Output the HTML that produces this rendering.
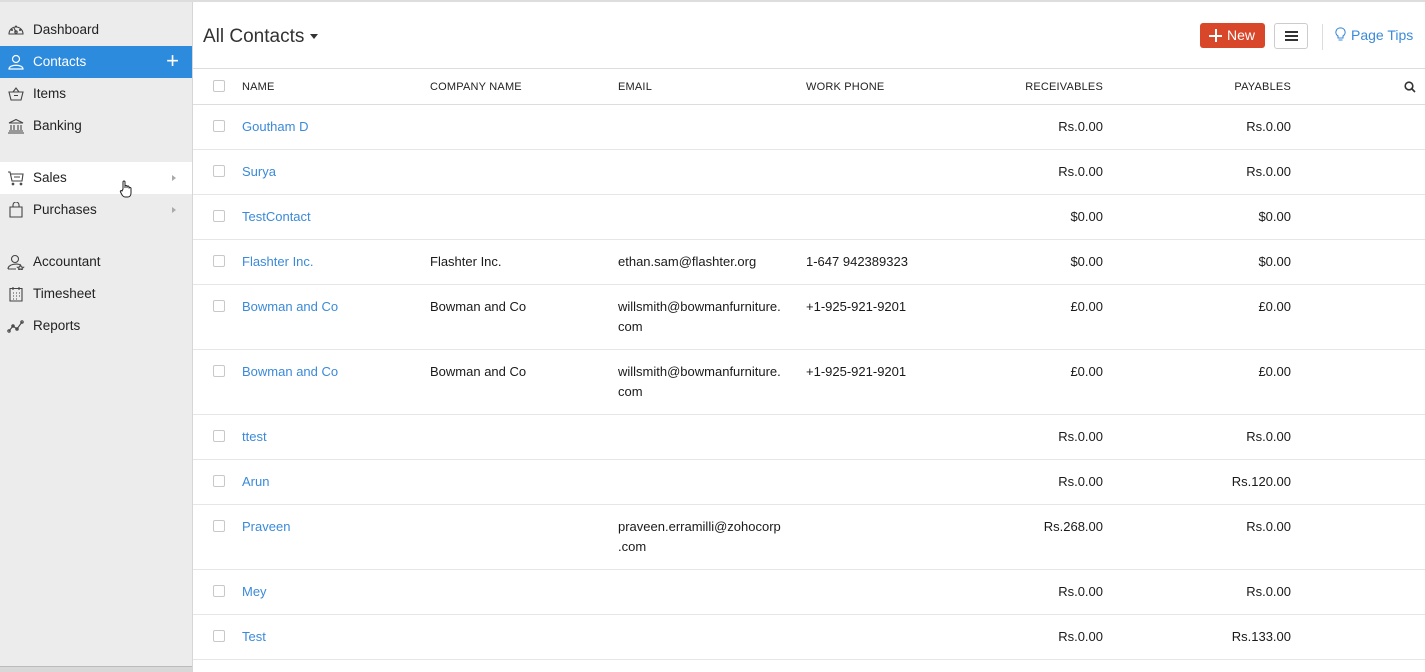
<!DOCTYPE html>
<html><head><meta charset="utf-8"><style>
*{box-sizing:border-box;margin:0;padding:0}
body{width:1425px;height:672px;overflow:hidden;font-family:"Liberation Sans",sans-serif;font-size:13px;color:#222;background:#fff;position:relative}
.top{position:absolute;left:0;top:0;width:1425px;height:2px;background:#ddd}
.side{position:absolute;left:0;top:2px;width:193px;height:670px;background:#ececec;border-right:1px solid #d6d6d6}
.side .bot{position:absolute;left:0;bottom:0;width:192px;height:6px;background:#d8d8d8;border-top:1px solid #bbb}
.nav{position:absolute;left:0;width:192px;height:32px;line-height:32px;padding-left:33px;font-size:13.5px;color:#222}
.nav svg{position:absolute;left:7px;top:8px}
.nav.act{background:#2c8bdc;color:#fff}
.nav.hov{background:#fff}
.arr{position:absolute;right:16px;top:13px;width:0;height:0;border-left:4px solid #aaa;border-top:3.5px solid transparent;border-bottom:3.5px solid transparent}
.main{position:absolute;left:193px;top:2px;right:0}
h1{position:absolute;left:10px;top:24px;font-size:19px;font-weight:normal;color:#333}
.caret{display:inline-block;margin-left:6px;vertical-align:middle;border-top:5px solid #333;border-left:4px solid transparent;border-right:4px solid transparent}
.new{position:absolute;left:1007px;top:21px;width:65px;height:25px;background:#d9472b;border-radius:3px;color:#fff;font-size:14px;line-height:25px;padding-left:27px}
.new:before,.new:after{content:"";position:absolute;background:#fff}
.new:before{left:9px;top:12px;width:13px;height:1.5px}
.new:after{left:15px;top:6px;width:1.5px;height:13px}
.menu{position:absolute;left:1081px;top:21px;width:34px;height:26px;border:1px solid #ccc;border-radius:3px}
.menu i{position:absolute;left:10px;width:13px;height:2px;background:#333}
.vsep{position:absolute;left:1129px;top:22px;width:1px;height:26px;background:#ddd}
.tips{position:absolute;left:1142px;top:25px;color:#3b8ad9;font-size:14px}
table{position:absolute;left:0;top:66px;width:1232px;border-collapse:collapse;table-layout:fixed}
th{height:36px;font-size:11px;font-weight:normal;color:#222;text-align:left;border-top:1px solid #ddd;border-bottom:1px solid #ddd;letter-spacing:.2px}
td{vertical-align:top;padding-top:12px;border-bottom:1px solid #e6e6e6;line-height:20px;font-size:13px;color:#1a1a1a}
td:first-child,th:first-child{padding-left:20px}
.cb{display:inline-block;width:12px;height:12px;border:1px solid #c8c8c8;border-radius:2px;vertical-align:middle;margin-top:-2px}
td.cbc{padding-top:11px}
td.nm{color:#3b8ad9}
.r{text-align:right}
tr.h1 td{height:45px}
tr.h2 td{height:65px}
</style></head><body>
<div class="top"></div>
<div class="side">
<div class="nav" style="top:12px"><svg width="18" height="16" viewBox="0 0 18 16" fill="none" stroke="#444" stroke-width="1.1"><path d="M2 12 A7 7 0 1 1 16 12 Z"/><circle cx="9" cy="10" r="1.2"/><path d="M9 10 L7 6"/><circle cx="5" cy="8" r=".5"/><circle cx="13" cy="8" r=".5"/><circle cx="9" cy="4.5" r=".5"/></svg>Dashboard</div>
<div class="nav act" style="top:44px"><svg width="18" height="16" viewBox="0 0 18 16" fill="none" stroke="#fff" stroke-width="1.2"><circle cx="9" cy="5" r="3.5"/><path d="M2 15 C2 10 16 10 16 15 Z"/></svg>Contacts<span style="position:absolute;right:13px;top:-1px;font-size:22px;font-weight:300">+</span></div>
<div class="nav" style="top:76px"><svg width="18" height="16" viewBox="0 0 18 16" fill="none" stroke="#444" stroke-width="1.1"><path d="M2 6 H16 L14 14 H4 Z M6 6 L9 2 L12 6 M7 9.5 H11"/></svg>Items</div>
<div class="nav" style="top:108px"><svg width="18" height="16" viewBox="0 0 18 16" fill="none" stroke="#444" stroke-width="1.1"><path d="M2 5 L9 1.5 L16 5 Z M4 7 V12 M7 7 V12 M11 7 V12 M14 7 V12 M2 13 H16 M1 15 H17"/></svg>Banking</div>
<div class="nav hov" style="top:160px"><svg width="18" height="16" viewBox="0 0 18 16" fill="none" stroke="#444" stroke-width="1.1"><path d="M1 2 H3 L5 11 H15 L16 4 H4 M7 7 H13"/><circle cx="6" cy="14" r=".8"/><circle cx="14" cy="14" r=".8"/></svg>Sales<span class="arr"></span></div>
<div class="nav" style="top:192px"><svg width="18" height="16" viewBox="0 0 18 16" fill="none" stroke="#444" stroke-width="1.1"><path d="M3 5 H15 V15 H3 Z M6 5 V3 A3 3 0 0 1 12 3 V5"/></svg>Purchases<span class="arr"></span></div>
<div class="nav" style="top:244px"><svg width="18" height="16" viewBox="0 0 18 16" fill="none" stroke="#444" stroke-width="1.1"><circle cx="8" cy="5" r="3.5"/><path d="M1 15 C1 10 11 9 13 11 M1 15 H9"/><path d="M13.5 11 L14.5 13 L16.5 13.3 L15 14.6 L15.4 16 L13.5 15 L11.6 16 L12 14.6 L10.5 13.3 L12.5 13 Z"/></svg>Accountant</div>
<div class="nav" style="top:276px"><svg width="18" height="16" viewBox="0 0 18 16" fill="none" stroke="#444" stroke-width="1.1"><path d="M3 2.5 H15 V15 H3 Z M6 1 V4 M12 1 V4"/><path d="M6 7 h1 M9 7 h1 M12 7 h1 M6 10 h1 M9 10 h1 M12 10 h1 M6 13 h1 M9 13 h1"/></svg>Timesheet</div>
<div class="nav" style="top:308px"><svg width="18" height="16" viewBox="0 0 18 16" fill="none" stroke="#444" stroke-width="1.1"><path d="M2 13 L6 8 L10 11 L15 4"/><circle cx="2" cy="13" r="1.2"/><circle cx="6" cy="8" r="1.2"/><circle cx="10" cy="11" r="1.2"/><circle cx="15" cy="4" r="1.2"/></svg>Reports</div>
<svg style="position:absolute;left:119px;top:178px" width="15" height="18" viewBox="0 0 15 18" fill="#fff" stroke="#222" stroke-width="1"><path d="M4 9 V2 A1 1 0 0 1 6 2 V8 V6.5 A1 1 0 0 1 8 6.5 V8 V7 A1 1 0 0 1 10 7 V8.5 A1 1 0 0 1 12 8.5 V13 C12 15 11 17 9 17 H6 C4 17 3 15 1.5 12 C1 11 2 10 3 11 Z"/></svg>
<div class="bot"></div>
</div>
<div class="main">
<h1>All Contacts<span class="caret"></span></h1>
<div class="new">New</div>
<div class="menu"><i style="top:7px"></i><i style="top:11px"></i><i style="top:15px"></i></div>
<div class="vsep"></div>
<div class="tips"><svg width="11" height="15" viewBox="0 0 11 15" fill="none" stroke="#3b8ad9" stroke-width="1.1" style="vertical-align:-2px;margin-right:5px"><path d="M5.5 1 A4.3 4.3 0 0 1 8 9 V11 H3 V9 A4.3 4.3 0 0 1 5.5 1 Z M3.5 13 H7.5"/></svg>Page Tips</div>
<table>
<colgroup><col style="width:49px"><col style="width:188px"><col style="width:188px"><col style="width:188px"><col style="width:137px"><col style="width:160px"><col style="width:188px"><col></colgroup>
<tr><th><span class="cb"></span></th><th>NAME</th><th>COMPANY NAME</th><th>EMAIL</th><th>WORK PHONE</th><th class="r">RECEIVABLES</th><th class="r">PAYABLES</th><th></th></tr>
<tr class="h1"><td class="cbc"><span class="cb"></span></td><td class="nm">Goutham D</td><td></td><td></td><td></td><td class="r">Rs.0.00</td><td class="r">Rs.0.00</td><td></td></tr>
<tr class="h1"><td class="cbc"><span class="cb"></span></td><td class="nm">Surya</td><td></td><td></td><td></td><td class="r">Rs.0.00</td><td class="r">Rs.0.00</td><td></td></tr>
<tr class="h1"><td class="cbc"><span class="cb"></span></td><td class="nm">TestContact</td><td></td><td></td><td></td><td class="r">$0.00</td><td class="r">$0.00</td><td></td></tr>
<tr class="h1"><td class="cbc"><span class="cb"></span></td><td class="nm">Flashter Inc.</td><td>Flashter Inc.</td><td>ethan.sam@flashter.org</td><td>1-647 942389323</td><td class="r">$0.00</td><td class="r">$0.00</td><td></td></tr>
<tr class="h2"><td class="cbc"><span class="cb"></span></td><td class="nm">Bowman and Co</td><td>Bowman and Co</td><td>willsmith@bowmanfurniture.<br>com</td><td>+1-925-921-9201</td><td class="r">£0.00</td><td class="r">£0.00</td><td></td></tr>
<tr class="h2"><td class="cbc"><span class="cb"></span></td><td class="nm">Bowman and Co</td><td>Bowman and Co</td><td>willsmith@bowmanfurniture.<br>com</td><td>+1-925-921-9201</td><td class="r">£0.00</td><td class="r">£0.00</td><td></td></tr>
<tr class="h1"><td class="cbc"><span class="cb"></span></td><td class="nm">ttest</td><td></td><td></td><td></td><td class="r">Rs.0.00</td><td class="r">Rs.0.00</td><td></td></tr>
<tr class="h1"><td class="cbc"><span class="cb"></span></td><td class="nm">Arun</td><td></td><td></td><td></td><td class="r">Rs.0.00</td><td class="r">Rs.120.00</td><td></td></tr>
<tr class="h2"><td class="cbc"><span class="cb"></span></td><td class="nm">Praveen</td><td></td><td>praveen.erramilli@zohocorp<br>.com</td><td></td><td class="r">Rs.268.00</td><td class="r">Rs.0.00</td><td></td></tr>
<tr class="h1"><td class="cbc"><span class="cb"></span></td><td class="nm">Mey</td><td></td><td></td><td></td><td class="r">Rs.0.00</td><td class="r">Rs.0.00</td><td></td></tr>
<tr class="h1"><td class="cbc"><span class="cb"></span></td><td class="nm">Test</td><td></td><td></td><td></td><td class="r">Rs.0.00</td><td class="r">Rs.133.00</td><td></td></tr>
</table>
<svg style="position:absolute;left:1211px;top:79px" width="12" height="12" viewBox="0 0 12 12" fill="none" stroke="#333" stroke-width="1.6"><circle cx="5" cy="5" r="3.8"/><path d="M8 8 L11 11"/></svg>
</div>
</body></html>
